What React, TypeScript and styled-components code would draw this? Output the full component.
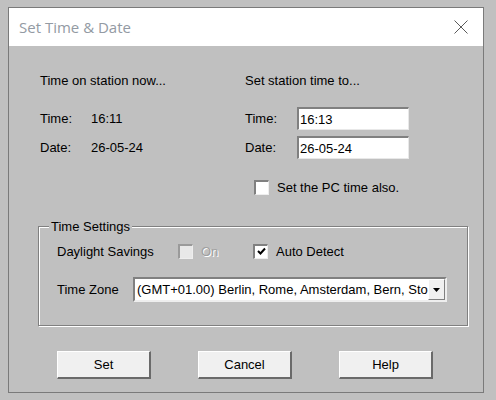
import React from "react";
import styled, { createGlobalStyle } from "styled-components";

interface CheckProps {
  checked?: boolean
  disabled?: boolean
}

const GlobalStyle = createGlobalStyle`
  html, body {
    margin: 0;
    background: #c0c0c0;
  }
  body {
    font-family: "Liberation Sans", Arial, sans-serif;
    font-size: 13px;
    color: #000;
  }
`;

const App: React.FC = (): React.ReactElement => {
  return (
    <>
      <GlobalStyle />
      <Window>
        <TitleBar>
          <Title>Set Time &amp; Date</Title>
          <CloseIcon width="14" height="14" viewBox="0 0 14 14">
            <path d="M0.5 0.5 L13.5 13.5 M13.5 0.5 L0.5 13.5" stroke="#5a5a5a" strokeWidth="1" fill="none" />
          </CloseIcon>
        </TitleBar>
        <Body>
          <Columns>
            <Column>
              <Heading>Time on station now...</Heading>
              <Row>
                <LeftLabel>Time:</LeftLabel>
                <span>16:11</span>
              </Row>
              <Row>
                <LeftLabel>Date:</LeftLabel>
                <span>26-05-24</span>
              </Row>
            </Column>
            <Column>
              <Heading>Set station time to...</Heading>
              <Row>
                <RightLabel>Time:</RightLabel>
                <Field>16:13</Field>
              </Row>
              <Row>
                <RightLabel>Date:</RightLabel>
                <Field>26-05-24</Field>
              </Row>
              <PcRow>
                <CheckBox />
                <span>Set the PC time also.</span>
              </PcRow>
            </Column>
          </Columns>

          <Group>
            <Legend>Time Settings</Legend>
            <GroupRow>
              <GroupLabel>Daylight Savings</GroupLabel>
              <CheckCell>
                <CheckBox disabled />
                <DisabledText>On</DisabledText>
              </CheckCell>
              <CheckCell>
                <CheckBox checked>
                  <svg width="9" height="9" viewBox="0 0 9 9">
                    <path d="M1 4 L3.5 6.5 L8 1.5" stroke="#000" strokeWidth="2" fill="none" />
                  </svg>
                </CheckBox>
                <span>Auto Detect</span>
              </CheckCell>
            </GroupRow>
            <ZoneRow>
              <ZoneLabel>Time Zone</ZoneLabel>
              <Select>
                <SelectText>(GMT+01.00) Berlin, Rome, Amsterdam, Bern, Sto</SelectText>
                <DropButton>
                  <svg width="7" height="4" viewBox="0 0 7 4">
                    <path d="M0 0 H7 L3.5 4 Z" fill="#000" />
                  </svg>
                </DropButton>
              </Select>
            </ZoneRow>
          </Group>

          <Buttons>
            <Button>Set</Button>
            <Button>Cancel</Button>
            <Button>Help</Button>
          </Buttons>
        </Body>
      </Window>
    </>
  );
};

const Window = styled.div`
  box-sizing: border-box;
  margin: 7px 0 0 8px;
  width: 476px;
  height: 386px;
  border: 1px solid #7a7a7a;
  background: #c0c0c0;
  display: flex;
  flex-direction: column;
`;

const TitleBar = styled.div`
  height: 38px;
  background: #fff;
  display: flex;
  align-items: center;
  justify-content: space-between;
  padding: 0 15px 0 10px;
`;

const Title = styled.span`
  font-family: "Open Sans", "Noto Sans", sans-serif;
  font-size: 15px;
  color: #939aa3;
  margin-top: -1px;
`;

const CloseIcon = styled.svg`
  display: block;
`;

const Body = styled.div`
  padding: 27px 0 0 31px;
`;

const Columns = styled.div`
  display: grid;
  grid-template-columns: 205px auto;
`;

const Column = styled.div`
  display: flex;
  flex-direction: column;
  gap: 6px;
`;

const Heading = styled.div`
  line-height: 16px;
  margin-bottom: 12px;
`;

const Row = styled.div`
  display: flex;
  align-items: center;
  height: 23px;
`;

const LeftLabel = styled.span`
  width: 51px;
`;

const RightLabel = styled.span`
  width: 52px;
`;

const Field = styled.div`
  box-sizing: border-box;
  width: 112px;
  height: 23px;
  background: #fff;
  border-top: 2px solid #808080;
  border-left: 2px solid #808080;
  border-right: 1px solid #e8e8e8;
  border-bottom: 1px solid #e8e8e8;
  padding-left: 1px;
  display: flex;
  align-items: center;
`;

const PcRow = styled.div`
  display: flex;
  align-items: center;
  gap: 8px;
  margin: 15px 0 0 9px;
`;

const CheckBox = styled.span<CheckProps>`
  box-sizing: border-box;
  width: 15px;
  height: 15px;
  background: ${({ disabled }) => (disabled ? "#e8e8e8" : "#fff")};
  border-top: 2px solid ${({ disabled }) => (disabled ? "#9a9a9a" : "#808080")};
  border-left: 2px solid ${({ disabled }) => (disabled ? "#9a9a9a" : "#808080")};
  border-right: 1px solid #eeeeee;
  border-bottom: 1px solid #eeeeee;
  display: flex;
  align-items: center;
  justify-content: center;
`;

const Group = styled.div`
  position: relative;
  box-sizing: border-box;
  width: 430px;
  height: 100px;
  margin: 31px 0 0 -2px;
  border: 1px solid #808080;
  box-shadow: 1px 1px 0 #fff, inset 1px 1px 0 #fff;
  padding: 16px 0 0 18px;
`;

const Legend = styled.span`
  position: absolute;
  top: -8px;
  left: 10px;
  padding: 0 2px;
  line-height: 16px;
  background: #c0c0c0;
`;

const GroupRow = styled.div`
  display: grid;
  grid-template-columns: 121px 75px auto;
  align-items: center;
  height: 16px;
`;

const GroupLabel = styled.span``;

const CheckCell = styled.span`
  display: flex;
  align-items: center;
  gap: 8px;
`;

const DisabledText = styled.span`
  color: #a0a0a0;
  text-shadow: 1px 1px 0 #fff;
`;

const ZoneRow = styled.div`
  display: flex;
  align-items: center;
  margin-top: 18px;
`;

const ZoneLabel = styled.span`
  width: 76px;
`;

const Select = styled.div`
  box-sizing: border-box;
  width: 314px;
  height: 25px;
  background: #fff;
  border-top: 2px solid #808080;
  border-left: 2px solid #808080;
  border-right: 2px solid #eeeeee;
  border-bottom: 2px solid #eeeeee;
  display: flex;
  align-items: stretch;
`;

const SelectText = styled.span`
  flex: 1;
  overflow: hidden;
  white-space: nowrap;
  padding-left: 2px;
  display: flex;
  align-items: center;
`;

const DropButton = styled.span`
  box-sizing: border-box;
  width: 17px;
  background: #f0f0f0;
  border-top: 1px solid #fff;
  border-left: 1px solid #fff;
  border-right: 1px solid #808080;
  border-bottom: 1px solid #808080;
  display: flex;
  align-items: center;
  justify-content: center;
`;

const Buttons = styled.div`
  display: flex;
  gap: 47px;
  margin: 25px 0 0 17px;
`;

const Button = styled.div`
  box-sizing: border-box;
  width: 94px;
  height: 28px;
  background: #f0f0f0;
  border-top: 1px solid #fff;
  border-left: 1px solid #fff;
  border-right: 2px solid #6a6a6a;
  border-bottom: 2px solid #6a6a6a;
  display: flex;
  align-items: center;
  justify-content: center;
`;

export default App;
